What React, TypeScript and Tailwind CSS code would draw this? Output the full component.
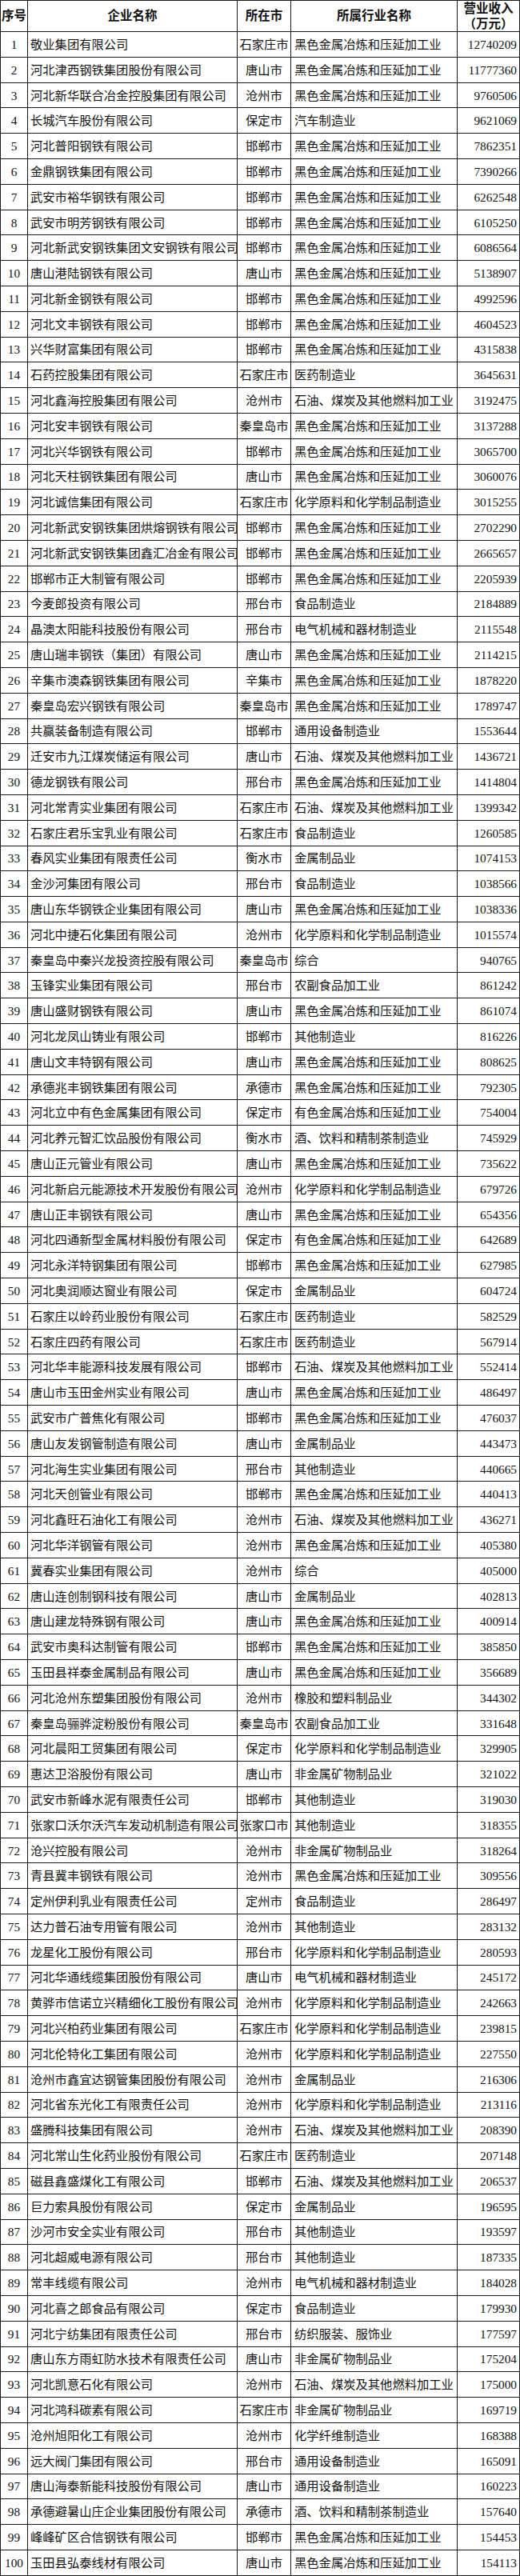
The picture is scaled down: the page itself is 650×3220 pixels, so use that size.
import React from 'react';

type Row = [string, string, string, number];

const FERROUS = '黑色金属冶炼和压延加工业';
const PETRO = '石油、煤炭及其他燃料加工业';
const CHEM = '化学原料和化学制品制造业';

const rows: Row[] = [
  ['敬业集团有限公司', '石家庄市', FERROUS, 12740209],
  ['河北津西钢铁集团股份有限公司', '唐山市', FERROUS, 11777360],
  ['河北新华联合冶金控股集团有限公司', '沧州市', FERROUS, 9760506],
  ['长城汽车股份有限公司', '保定市', '汽车制造业', 9621069],
  ['河北普阳钢铁有限公司', '邯郸市', FERROUS, 7862351],
  ['金鼎钢铁集团有限公司', '邯郸市', FERROUS, 7390266],
  ['武安市裕华钢铁有限公司', '邯郸市', FERROUS, 6262548],
  ['武安市明芳钢铁有限公司', '邯郸市', FERROUS, 6105250],
  ['河北新武安钢铁集团文安钢铁有限公司', '邯郸市', FERROUS, 6086564],
  ['唐山港陆钢铁有限公司', '唐山市', FERROUS, 5138907],
  ['河北新金钢铁有限公司', '邯郸市', FERROUS, 4992596],
  ['河北文丰钢铁有限公司', '邯郸市', FERROUS, 4604523],
  ['兴华财富集团有限公司', '邯郸市', FERROUS, 4315838],
  ['石药控股集团有限公司', '石家庄市', '医药制造业', 3645631],
  ['河北鑫海控股集团有限公司', '沧州市', PETRO, 3192475],
  ['河北安丰钢铁有限公司', '秦皇岛市', FERROUS, 3137288],
  ['河北兴华钢铁有限公司', '邯郸市', FERROUS, 3065700],
  ['河北天柱钢铁集团有限公司', '唐山市', FERROUS, 3060076],
  ['河北诚信集团有限公司', '石家庄市', CHEM, 3015255],
  ['河北新武安钢铁集团烘熔钢铁有限公司', '邯郸市', FERROUS, 2702290],
  ['河北新武安钢铁集团鑫汇冶金有限公司', '邯郸市', FERROUS, 2665657],
  ['邯郸市正大制管有限公司', '邯郸市', FERROUS, 2205939],
  ['今麦郎投资有限公司', '邢台市', '食品制造业', 2184889],
  ['晶澳太阳能科技股份有限公司', '邢台市', '电气机械和器材制造业', 2115548],
  ['唐山瑞丰钢铁（集团）有限公司', '唐山市', FERROUS, 2114215],
  ['辛集市澳森钢铁集团有限公司', '辛集市', FERROUS, 1878220],
  ['秦皇岛宏兴钢铁有限公司', '秦皇岛市', FERROUS, 1789747],
  ['共赢装备制造有限公司', '邯郸市', '通用设备制造业', 1553644],
  ['迁安市九江煤炭储运有限公司', '唐山市', PETRO, 1436721],
  ['德龙钢铁有限公司', '邢台市', FERROUS, 1414804],
  ['河北常青实业集团有限公司', '石家庄市', PETRO, 1399342],
  ['石家庄君乐宝乳业有限公司', '石家庄市', '食品制造业', 1260585],
  ['春风实业集团有限责任公司', '衡水市', '金属制品业', 1074153],
  ['金沙河集团有限公司', '邢台市', '食品制造业', 1038566],
  ['唐山东华钢铁企业集团有限公司', '唐山市', FERROUS, 1038336],
  ['河北中捷石化集团有限公司', '沧州市', CHEM, 1015574],
  ['秦皇岛中秦兴龙投资控股有限公司', '秦皇岛市', '综合', 940765],
  ['玉锋实业集团有限公司', '邢台市', '农副食品加工业', 861242],
  ['唐山盛财钢铁有限公司', '唐山市', FERROUS, 861074],
  ['河北龙凤山铸业有限公司', '邯郸市', '其他制造业', 816226],
  ['唐山文丰特钢有限公司', '唐山市', FERROUS, 808625],
  ['承德兆丰钢铁集团有限公司', '承德市', FERROUS, 792305],
  ['河北立中有色金属集团有限公司', '保定市', '有色金属冶炼和压延加工业', 754004],
  ['河北养元智汇饮品股份有限公司', '衡水市', '酒、饮料和精制茶制造业', 745929],
  ['唐山正元管业有限公司', '唐山市', FERROUS, 735622],
  ['河北新启元能源技术开发股份有限公司', '沧州市', CHEM, 679726],
  ['唐山正丰钢铁有限公司', '唐山市', FERROUS, 654356],
  ['河北四通新型金属材料股份有限公司', '保定市', '有色金属冶炼和压延加工业', 642689],
  ['河北永洋特钢集团有限公司', '邯郸市', FERROUS, 627985],
  ['河北奥润顺达窗业有限公司', '保定市', '金属制品业', 604724],
  ['石家庄以岭药业股份有限公司', '石家庄市', '医药制造业', 582529],
  ['石家庄四药有限公司', '石家庄市', '医药制造业', 567914],
  ['河北华丰能源科技发展有限公司', '邯郸市', PETRO, 552414],
  ['唐山市玉田金州实业有限公司', '唐山市', FERROUS, 486497],
  ['武安市广普焦化有限公司', '邯郸市', FERROUS, 476037],
  ['唐山友发钢管制造有限公司', '唐山市', '金属制品业', 443473],
  ['河北海生实业集团有限公司', '邢台市', '其他制造业', 440665],
  ['河北天创管业有限公司', '邯郸市', FERROUS, 440413],
  ['河北鑫旺石油化工有限公司', '沧州市', PETRO, 436271],
  ['河北华洋钢管有限公司', '沧州市', FERROUS, 405380],
  ['冀春实业集团有限公司', '沧州市', '综合', 405000],
  ['唐山连创制钢科技有限公司', '唐山市', '金属制品业', 402813],
  ['唐山建龙特殊钢有限公司', '唐山市', FERROUS, 400914],
  ['武安市奥科达制管有限公司', '邯郸市', FERROUS, 385850],
  ['玉田县祥泰金属制品有限公司', '唐山市', FERROUS, 356689],
  ['河北沧州东塑集团股份有限公司', '沧州市', '橡胶和塑料制品业', 344302],
  ['秦皇岛骊骅淀粉股份有限公司', '秦皇岛市', '农副食品加工业', 331648],
  ['河北晨阳工贸集团有限公司', '保定市', CHEM, 329905],
  ['惠达卫浴股份有限公司', '唐山市', '非金属矿物制品业', 321022],
  ['武安市新峰水泥有限责任公司', '邯郸市', '其他制造业', 319030],
  ['张家口沃尔沃汽车发动机制造有限公司', '张家口市', '其他制造业', 318355],
  ['沧兴控股有限公司', '沧州市', '非金属矿物制品业', 318264],
  ['青县冀丰钢铁有限公司', '沧州市', FERROUS, 309556],
  ['定州伊利乳业有限责任公司', '定州市', '食品制造业', 286497],
  ['达力普石油专用管有限公司', '沧州市', '其他制造业', 283132],
  ['龙星化工股份有限公司', '邢台市', CHEM, 280593],
  ['河北华通线缆集团股份有限公司', '唐山市', '电气机械和器材制造业', 245172],
  ['黄骅市信诺立兴精细化工股份有限公司', '沧州市', CHEM, 242663],
  ['河北兴柏药业集团有限公司', '石家庄市', CHEM, 239815],
  ['河北伦特化工集团有限公司', '沧州市', CHEM, 227550],
  ['沧州市鑫宜达钢管集团股份有限公司', '沧州市', '金属制品业', 216306],
  ['河北省东光化工有限责任公司', '沧州市', CHEM, 213116],
  ['盛腾科技集团有限公司', '沧州市', PETRO, 208390],
  ['河北常山生化药业股份有限公司', '石家庄市', '医药制造业', 207148],
  ['磁县鑫盛煤化工有限公司', '邯郸市', PETRO, 206537],
  ['巨力索具股份有限公司', '保定市', '金属制品业', 196595],
  ['沙河市安全实业有限公司', '邢台市', '其他制造业', 193597],
  ['河北超威电源有限公司', '邢台市', '其他制造业', 187335],
  ['常丰线缆有限公司', '沧州市', '电气机械和器材制造业', 184028],
  ['河北喜之郎食品有限公司', '保定市', '食品制造业', 179930],
  ['河北宁纺集团有限责任公司', '邢台市', '纺织服装、服饰业', 177597],
  ['唐山东方雨虹防水技术有限责任公司', '唐山市', '非金属矿物制品业', 175204],
  ['河北凯意石化有限公司', '沧州市', PETRO, 175000],
  ['河北鸿科碳素有限公司', '石家庄市', '非金属矿物制品业', 169719],
  ['沧州旭阳化工有限公司', '沧州市', '化学纤维制造业', 168388],
  ['远大阀门集团有限公司', '邢台市', '通用设备制造业', 165091],
  ['唐山海泰新能科技股份有限公司', '唐山市', '通用设备制造业', 160223],
  ['承德避暑山庄企业集团股份有限公司', '承德市', '酒、饮料和精制茶制造业', 157640],
  ['峰峰矿区合信钢铁有限公司', '邯郸市', FERROUS, 154453],
  ['玉田县弘泰线材有限公司', '唐山市', FERROUS, 154113],
];

const cols = 'grid grid-cols-[34px_262px_67px_208px_78px]';
const cell = 'flex items-center overflow-hidden whitespace-nowrap border-r border-b border-[#1a1a1a]';

export default function App() {
  return (
    <div
      className="w-[650px] bg-white text-[#111] border-l border-t border-[#1a1a1a]"
      style={{ fontFamily: '"Liberation Serif", "Noto Sans CJK SC", serif' }}
    >
      {/* header */}
      <div className={`${cols} h-[39px] text-[15.5px] font-bold`}>
        <div className={`${cell} justify-center`}>序号</div>
        <div className={`${cell} justify-center`}>企业名称</div>
        <div className={`${cell} justify-center`}>所在市</div>
        <div className={`${cell} justify-center`}>所属行业名称</div>
        <div className={`${cell} flex-col justify-center text-center leading-[19px]`}>
          <span>营业收入</span>
          <span>（万元）</span>
        </div>
      </div>

      {rows.map(([name, city, industry, revenue], i) => (
        <div key={i} className={`${cols} h-[31.8px] text-[15.3px]`}>
          <div className={`${cell} justify-center pt-[2px]`}>{i + 1}</div>
          <div className={`${cell} pl-[3px] pt-[2px]`}>{name}</div>
          <div className={`${cell} justify-center pt-[2px]`}>{city}</div>
          <div className={`${cell} pl-[4px] pt-[2px]`}>{industry}</div>
          <div className={`${cell} justify-end pr-[3px] pt-[2px]`}>{revenue}</div>
        </div>
      ))}
    </div>
  );
}
